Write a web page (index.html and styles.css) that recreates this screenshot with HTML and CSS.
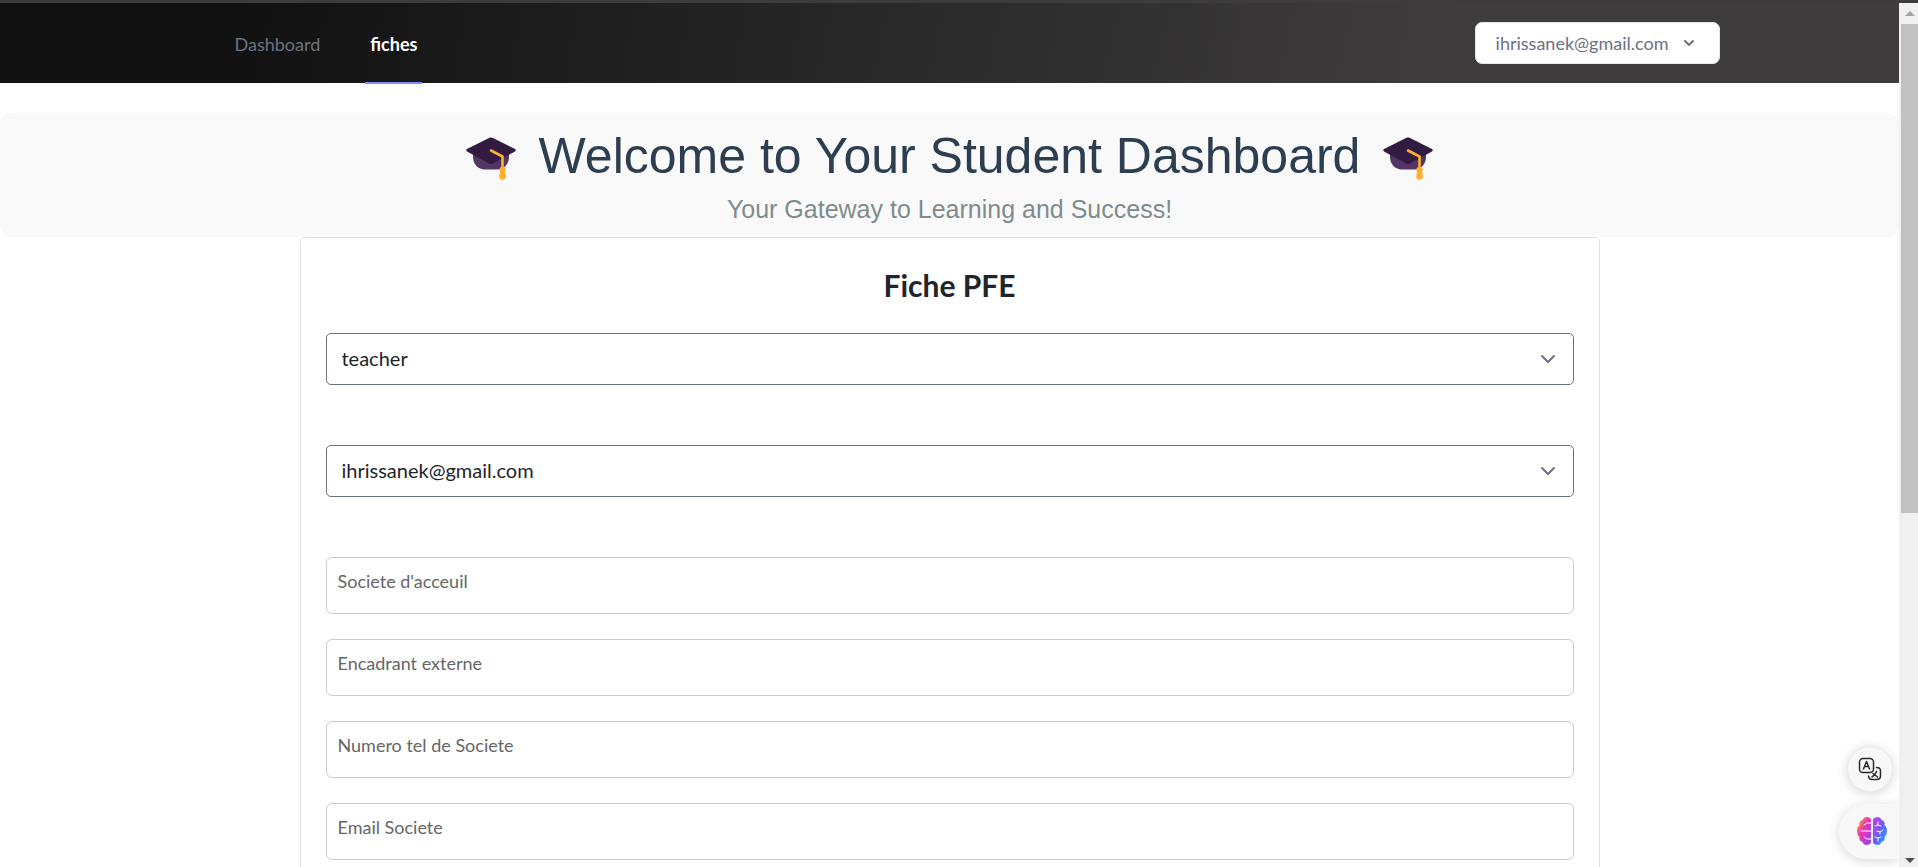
FILE: index.html
```html
<!DOCTYPE html>
<html lang="fr">
<head>
<meta charset="utf-8">
<title>Fiche PFE</title>
<link rel="stylesheet" href="styles.css">
</head>
<body>
<svg class="defs" aria-hidden="true">
  <symbol id="cap" viewBox="0 0 50 50">
    <path d="M7 20h36v6c0 7-5 12.500-12 12.500H19C12 38.500 7 33 7 26z" fill="#533566"/>
    <path d="M23.500 6.800q1.500-.8 3 0L49 18q1.500 1 0 2.400L27 32.600q-2 1-4 0L1 20.400Q-.5 19 1 18z" fill="#321b41"/>
    <path d="M25 19.500 36.500 25.500V38" fill="none" stroke="#ffb02e" stroke-width="2.600" stroke-linecap="round" stroke-linejoin="round"/>
    <path d="M33.400 39a3.200 3.200 0 0 1 6.400 0q0 1.600-.8 2.600 1 1.400.9 4a3.300 3.300 0 0 1-6.600 0q-.1-2.600.9-4-.8-1-.8-2.600z" fill="#ffb02e"/>
  </symbol>
</svg>
<div class="window">
  <div class="page">
    <nav class="nav">
      <div class="nav-inner">
        <div class="links">
          <a href="#" class="link">Dashboard</a>
          <a href="#" class="link active">fiches</a>
        </div>
        <button class="account" type="button">ihrissanek@gmail.com
          <svg viewBox="0 0 20 20" aria-hidden="true"><path fill-rule="evenodd" d="M5.293 7.293a1 1 0 011.414 0L10 10.586l3.293-3.293a1 1 0 111.414 1.414l-4 4a1 1 0 01-1.414 0l-4-4a1 1 0 010-1.414z"/></svg>
        </button>
      </div>
    </nav>
    <header class="banner">
      <h1><svg class="cap" aria-hidden="true"><use href="#cap"/></svg>Welcome to Your Student Dashboard<svg class="cap" aria-hidden="true"><use href="#cap"/></svg></h1>
      <p>Your Gateway to Learning and Success!</p>
    </header>
    <main class="card">
      <h2>Fiche PFE</h2>
      <form class="form">
        <div class="pick">
          <select aria-label="Role"><option>teacher</option></select>
          <svg viewBox="0 0 16 16" aria-hidden="true"><path d="m2 5 6 6 6-6"/></svg>
        </div>
        <div class="pick">
          <select aria-label="Email"><option>ihrissanek@gmail.com</option></select>
          <svg viewBox="0 0 16 16" aria-hidden="true"><path d="m2 5 6 6 6-6"/></svg>
        </div>
        <textarea rows="1" aria-label="Societe d'acceuil" placeholder="Societe d'acceuil"></textarea>
        <textarea rows="1" aria-label="Encadrant externe" placeholder="Encadrant externe"></textarea>
        <textarea rows="1" aria-label="Numero tel de Societe" placeholder="Numero tel de Societe"></textarea>
        <textarea rows="1" aria-label="Email Societe" placeholder="Email Societe"></textarea>
      </form>
    </main>
    <div class="tools">
      <button class="translate" type="button" aria-label="Translate">
        <svg viewBox="0 0 24 24" aria-hidden="true"><rect x="1.500" y="1.500" width="14" height="14" rx="3.500"/><path d="m5.500 12 3-7.500 3 7.500M6.500 9.500h4M18.500 10.500c2.500 0 4 1 4 3.500v5c0 2.500-1.500 3.500-4 3.500h-4c-2.500 0-4-1-4-3.500M18.500 14.500q-1 3.500-4.500 5.500M15 16.500l4.500 3.500"/></svg>
      </button>
      <button class="assistant" type="button" aria-label="Assistant">
        <svg viewBox="0 0 30 28" aria-hidden="true">
          <defs>
            <linearGradient id="left" x1="0" y1="0" x2="1" y2="1"><stop offset=".12" stop-color="#ff9d2e"/><stop offset=".42" stop-color="#ee35b4"/><stop offset="1" stop-color="#8b45ee"/></linearGradient>
            <linearGradient id="right" x1="0" y1="0" x2="1" y2="1"><stop offset="0" stop-color="#d13be0"/><stop offset=".5" stop-color="#6a5cff"/><stop offset=".85" stop-color="#22a0f8"/></linearGradient>
          </defs>
          <path fill="url(#left)" d="M14 2v24q-2 2-4.500 2-3 0-4-3-4-1-3-5-2.500-2-2.500-6t2.500-6q-1-4 3-5 1-3 4-3Q12 0 14 2z"/>
          <path fill="url(#right)" d="M16 2v24q2 2 4.500 2 3 0 4-3 4-1 3-5 2.500-2 2.500-6t-2.500-6q1-4-3-5-1-3-4-3Q18 0 16 2z"/>
          <path class="folds" d="M14 6h-4L7 8M14 14H4M14 22h-4l-3-2M18 9l3-1 3 1M21 8V5M20 14l3 1 3-2M23 15v2M18 20l3 1 3-1M21 21v3"/>
        </svg>
      </button>
    </div>
  </div>
  <div class="scrollbar" aria-hidden="true">
    <span class="arrow up"></span>
    <span class="thumb"></span>
    <span class="arrow down"></span>
  </div>
</div>
</body>
</html>
```
FILE: styles.css
```css
* { box-sizing: border-box; }
body {
  margin: 0;
  background: #fff;
  color: #212529;
  font-family: "Lato", sans-serif;
}
.defs { display: none; }
.window {
  display: flex;
  height: 100vh;
  border-top: 3px solid #3c3c3c;
  overflow: hidden;
}
.page { flex: 1; min-width: 0; }
.nav {
  height: 80px;
  background: linear-gradient(102deg, #111 12%, #2b2b2b 50%, #3f3c3d 76%);
}
.nav-inner {
  display: flex;
  justify-content: space-between;
  max-width: 1540px;
  height: 100%;
  margin: 0 auto;
  padding-left: 50px;
}
.links { display: flex; gap: 40px; height: 81px; }
.link {
  display: flex;
  align-items: center;
  padding: 3px 5px 0;
  border-bottom: 2px solid transparent;
  color: #6b7280;
  font-size: 18px;
  text-decoration: none;
}
.active { color: #fff; border-color: #818cf8; font-weight: 700; }
.account {
  display: flex;
  align-items: center;
  align-self: center;
  gap: 10px;
  height: 42px;
  padding: 0 20px;
  border: 1px solid #e5e7eb;
  border-radius: 7px;
  background: #fff;
  color: #6b7280;
  font: 18px "Lato", sans-serif;
}
.account svg { width: 20px; height: 20px; fill: currentColor; }
.banner {
  margin-top: 30px;
  padding: 13px 0 12px;
  border-radius: 12px;
  background: #f9f9f9;
  font-family: "Liberation Sans", sans-serif;
  text-align: center;
}
.banner h1 {
  display: flex;
  justify-content: center;
  align-items: center;
  gap: 23px;
  margin: 0;
  color: #2c3e50;
  font-size: 50px;
  font-weight: 400;
  line-height: 60px;
}
.cap { width: 50px; height: 50px; }
.banner p {
  margin: 8px 0 0;
  color: #7f8c8d;
  font-size: 25px;
  line-height: 31px;
}
.card {
  max-width: 1300px;
  height: 900px;
  margin: 0 auto;
  padding: 25px;
  border: 1px solid #dee2e6;
  border-radius: 5px;
  background: #fff;
}
.card h2 {
  margin: 0 0 25px;
  font-size: 30px;
  font-weight: 700;
  line-height: 45px;
  text-align: center;
}
.form { display: flex; flex-direction: column; gap: 25px; }
.pick { position: relative; margin-bottom: 35px; }
.pick select {
  display: block;
  width: 100%;
  height: 52px;
  padding: 0 15px 2px;
  appearance: none;
  border: 1px solid #6b7280;
  border-radius: 5px;
  background: #fff;
  color: #212529;
  font: 20px "Lato", sans-serif;
}
.pick svg {
  position: absolute;
  top: 18px;
  right: 18px;
  width: 16px;
  height: 16px;
  fill: none;
  stroke: #6b7280;
  stroke-width: 2;
  stroke-linecap: round;
  stroke-linejoin: round;
}
.form textarea {
  display: block;
  width: 100%;
  height: 57px;
  padding: 11px;
  resize: none;
  overflow: hidden;
  border: 1px solid #ccc;
  border-radius: 6px;
  font: 18px/25px "Lato", sans-serif;
}
.form textarea::placeholder { color: #666; opacity: 1; }
.tools {
  position: fixed;
  right: 19px;
  bottom: 8px;
  display: flex;
  flex-direction: column;
  align-items: flex-end;
  gap: 12px;
}
.translate, .assistant {
  display: grid;
  place-items: center;
  padding: 0;
  border: 0;
  background: #f8f8f9;
  box-shadow: 0 2px 12px rgba(0, 0, 0, .16);
}
.translate { width: 46px; height: 46px; margin-right: 6px; border: 1px solid #e8e8f0; border-radius: 50%; }
.translate svg { width: 24px; height: 24px; fill: none; stroke: #2b2b2b; stroke-width: 1.500; stroke-linecap: round; stroke-linejoin: round; }
.assistant { width: 60px; height: 55px; padding: 0 0 2px 6px; border-radius: 28px 0 0 28px; }
.assistant svg { width: 30px; height: 28px; }
.folds { fill: none; stroke: #fff; stroke-width: 1; stroke-linecap: round; }
.scrollbar {
  z-index: 1;
  display: flex;
  flex-direction: column;
  width: 19px;
  padding-left: 2px;
  background: #f0f0f0;
}
.arrow { display: grid; place-items: center; height: 21px; }
.arrow::before { content: ""; border: 5px solid transparent; }
.up::before { border-top: 0; border-bottom-color: #a3a3a3; }
.down { margin-top: auto; height: 13px; }
.down::before { border-bottom: 0; border-top-color: #505050; }
.thumb { height: 56.6%; background: #c1c1c1; }
```
